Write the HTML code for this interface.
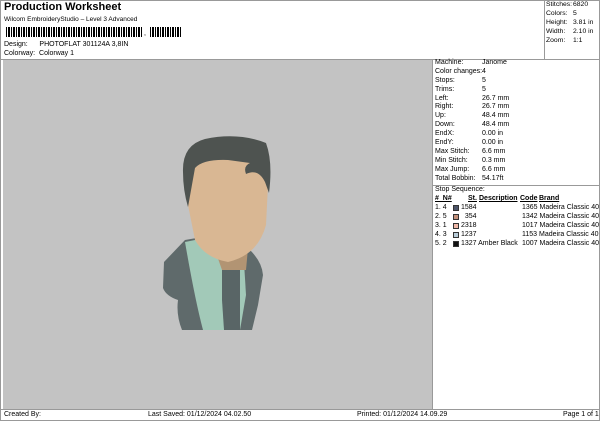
<!DOCTYPE html>
<html><head><style>
*{margin:0;padding:0;box-sizing:border-box}
body{width:600px;height:424px;background:#fff;font-family:"Liberation Sans",sans-serif;font-size:7px;color:#000;position:relative;overflow:hidden}
.a{position:absolute;white-space:nowrap}
.bc{position:absolute;left:6px;top:27px;width:136px;height:10px;background:repeating-linear-gradient(90deg,#000 0 1px,#fff 1px 2px,#000 2px 4px,#fff 4px 5px)}
.bc2{position:absolute;left:150px;top:27px;width:32px;height:10px;background:repeating-linear-gradient(90deg,#000 0 1px,#fff 1px 2px,#000 2px 4px,#fff 4px 5px)}
.r div{height:8.9px;line-height:8.9px}
.r span{display:inline-block;width:47px}
</style></head><body>
<div class="a" style="left:4px;top:1px;font-size:11px;font-weight:bold">Production Worksheet</div>
<div class="a" style="left:4px;top:16px;font-size:6.5px">Wilcom EmbroideryStudio – Level 3 Advanced</div>
<div class="bc"></div><div class="a" style="left:144px;top:30px;font-size:7px">,</div><div class="bc2"></div>
<div class="a" style="left:4px;top:41px">Design:&nbsp;&nbsp;&nbsp;&nbsp;&nbsp;&nbsp;PHOTOFLAT 301124A 3,8IN</div>
<div class="a" style="left:4px;top:50px">Colorway:&nbsp;&nbsp;Colorway 1</div>
<div class="a" style="left:0;top:0;width:600px;height:421px;border:1px solid #999"></div>
<div class="a" style="left:544px;top:0;width:56px;height:59px;border-left:1px solid #999"></div>
<div class="a" style="left:0;top:59px;width:600px;border-top:1px solid #999"></div>
<div class="a r" style="left:546px;top:1px;font-size:6.8px">
<div><span style="width:27px">Stitches:</span>6820</div><div><span style="width:27px">Colors:</span>5</div><div><span style="width:27px">Height:</span>3.81 in</div><div><span style="width:27px">Width:</span>2.10 in</div><div><span style="width:27px">Zoom:</span>1:1</div></div>
<div class="a" style="left:3px;top:60px;width:429px;height:349px;background:#c3c3c3"></div>
<div class="a" style="left:432px;top:60px;width:1px;height:349px;background:#999"></div>
<svg class="a" style="left:0;top:0" width="600" height="424">
<path d="M185 240 L208 236 L250 250 Q262 262 263 275 L258 305 L252 330 L182 330 Q176 315 178 300 Q166 296 163 288 L164 262 Z" fill="#5f6a6b"/>
<path d="M185 242 L205 238 L244 262 L246 295 L240 330 L203 330 Q195 300 185 242Z" fill="#a2c9b8"/>
<path d="M222 270 L240 270 L240 300 L240 330 L224 330 L222 300Z" fill="#596566"/>
<path d="M215 250 L248 248 L246 270 L222 270Z" fill="#b29473"/>
<path d="M190 175 Q198 158 228 156 Q262 158 268 185 L266 225 Q258 255 228 262 Q205 258 195 240 L188 205Z" fill="#d9b793"/>
<path d="M183 172 Q182 145 205 139 Q238 132 266 143 Q273 162 269 193 L265 182 Q258 168 246 174 Q243 166 250 163 L228 160 Q203 159 195 168 L188 207 Q183 190 183 172Z" fill="#4e5350"/>
</svg>
<div class="a r" style="left:435px;top:59px">
<div><span>Machine:</span>Janome</div><div><span>Color changes:</span>4</div><div><span>Stops:</span>5</div><div><span>Trims:</span>5</div><div><span>Left:</span>26.7 mm</div><div><span>Right:</span>26.7 mm</div><div><span>Up:</span>48.4 mm</div><div><span>Down:</span>48.4 mm</div><div><span>EndX:</span>0.00 in</div><div><span>EndY:</span>0.00 in</div><div><span>Max Stitch:</span>6.6 mm</div><div><span>Min Stitch:</span>0.3 mm</div><div><span>Max Jump:</span>6.6 mm</div><div><span>Total Bobbin:</span>54.17ft</div></div>
<div class="a" style="left:433px;top:185px;width:167px;border-top:1px solid #999"></div>
<div class="a" style="left:435px;top:186px">Stop Sequence:</div>
<div class="a" style="left:435px;top:195px;font-weight:bold;text-decoration:underline">#&nbsp;&nbsp;N#</div>
<div class="a" style="left:468px;top:195px;font-weight:bold;text-decoration:underline">St.</div>
<div class="a" style="left:479px;top:195px;font-weight:bold;text-decoration:underline">Description</div>
<div class="a" style="left:520px;top:195px;font-weight:bold;text-decoration:underline">Code</div>
<div class="a" style="left:539px;top:195px;font-weight:bold;text-decoration:underline">Brand</div>
<div class="a" style="left:435px;top:203px;line-height:9px">1. 4<br>2. 5<br>3. 1<br>4. 3<br>5. 2</div>
<div class="a" style="left:453px;top:205px;width:6px;height:6px;background:#4c5468;border:1px solid #333"></div>
<div class="a" style="left:453px;top:214px;width:6px;height:6px;background:#c4907a;border:1px solid #333"></div>
<div class="a" style="left:453px;top:223px;width:6px;height:6px;background:#f0b8a8;border:1px solid #333"></div>
<div class="a" style="left:453px;top:232px;width:6px;height:6px;background:#b8ccd8;border:1px solid #333"></div>
<div class="a" style="left:453px;top:241px;width:6px;height:6px;background:#111;border:1px solid #333"></div>
<div class="a" style="left:461px;top:203px;line-height:9px">1584<br>&nbsp;&nbsp;354<br>2318<br>1237<br>1327 Amber Black</div>
<div class="a" style="left:522px;top:203px;line-height:9px">1365 Madeira Classic 40<br>1342 Madeira Classic 40<br>1017 Madeira Classic 40<br>1153 Madeira Classic 40<br>1007 Madeira Classic 40</div>
<div class="a" style="left:0;top:409px;width:600px;border-top:1px solid #999"></div>
<div class="a" style="left:4px;top:411px">Created By:</div>
<div class="a" style="left:148px;top:411px">Last Saved: 01/12/2024 04.02.50</div>
<div class="a" style="left:357px;top:411px">Printed: 01/12/2024 14.09.29</div>
<div class="a" style="left:563px;top:411px">Page 1 of 1</div>
</body></html>
